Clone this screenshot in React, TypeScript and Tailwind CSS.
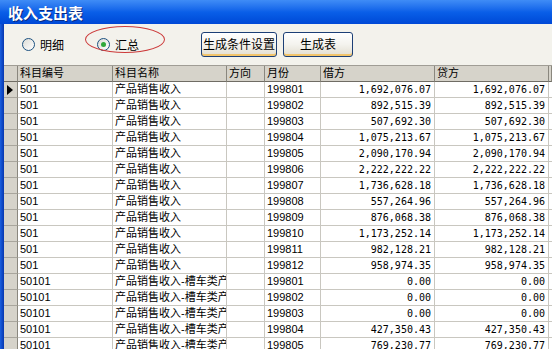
import React from "react";

const rows: [string, string, string, string][] = [
  ["501", "产品销售收入", "199801", "1,692,076.07"],
  ["501", "产品销售收入", "199802", "892,515.39"],
  ["501", "产品销售收入", "199803", "507,692.30"],
  ["501", "产品销售收入", "199804", "1,075,213.67"],
  ["501", "产品销售收入", "199805", "2,090,170.94"],
  ["501", "产品销售收入", "199806", "2,222,222.22"],
  ["501", "产品销售收入", "199807", "1,736,628.18"],
  ["501", "产品销售收入", "199808", "557,264.96"],
  ["501", "产品销售收入", "199809", "876,068.38"],
  ["501", "产品销售收入", "199810", "1,173,252.14"],
  ["501", "产品销售收入", "199811", "982,128.21"],
  ["501", "产品销售收入", "199812", "958,974.35"],
  ["50101", "产品销售收入-槽车类产品", "199801", "0.00"],
  ["50101", "产品销售收入-槽车类产品", "199802", "0.00"],
  ["50101", "产品销售收入-槽车类产品", "199803", "0.00"],
  ["50101", "产品销售收入-槽车类产品", "199804", "427,350.43"],
  ["50101", "产品销售收入-槽车类产品", "199805", "769,230.77"],
];

const cols = "grid grid-cols-[14px_95px_114px_38px_56px_114px_114px_1fr]";
const cell = "h-[16px] leading-[15px] border-r border-b border-[#c9c7c0] overflow-hidden whitespace-nowrap pl-[2px]";
const num = "h-[16px] leading-[15px] border-r border-b border-[#c9c7c0] overflow-hidden whitespace-nowrap text-right pr-[3px] font-['DejaVu_Sans_Mono',monospace] text-[10px]";
const head = "h-[16px] leading-[15px] border-r border-b border-r-[#8a877e] border-b-[#6f6c64] bg-[#d6d3ca] overflow-hidden whitespace-nowrap pl-[2px]";

function XpButton({ label, w }: { label: string; w: string }) {
  return (
    <button
      className={`${w} h-[25px] px-0 whitespace-nowrap rounded-[3px] border border-[#1c3f76] bg-gradient-to-b from-[#ffffff] via-[#f4f3ee] to-[#e2ddcf] shadow-[inset_0_-2px_0_#f2c46a,inset_0_1px_0_#ffffff] text-[12px] text-black font-['Noto_Sans_CJK_SC',sans-serif] leading-none`}
    >
      {label}
    </button>
  );
}

function Radio({ checked, label }: { checked?: boolean; label: string }) {
  return (
    <div className="flex items-center gap-[5px]">
      <div className="w-[13px] h-[13px] rounded-full border border-[#1c5180] bg-gradient-to-br from-[#dcdcd6] to-[#ffffff] flex items-center justify-center">
        {checked && <div className="w-[5px] h-[5px] rounded-full bg-[#2fa83a]" />}
      </div>
      <span className="text-[12px] text-black font-['Noto_Sans_CJK_SC',sans-serif]">{label}</span>
    </div>
  );
}

export default function App() {
  return (
    <div className="w-[552px] h-[349px] overflow-hidden flex flex-col bg-[#f3f2ec] font-['Liberation_Sans','Noto_Sans_CJK_SC',sans-serif]">
      {/* title bar */}
      <div className="h-[24px] shrink-0 bg-gradient-to-b from-[#3f8cf6] via-[#0a5fe8] to-[#0048d6] flex items-center pl-[8px]">
        <span className="text-white font-bold text-[15px] font-['Noto_Sans_CJK_SC',sans-serif] leading-none [text-shadow:1px_1px_0_#0a2a80]">
          收入支出表
        </span>
      </div>

      <div className="flex flex-1 min-h-0">
        <div className="w-[4px] shrink-0 bg-gradient-to-r from-[#1a5fe0] to-[#0837b0]" />

        <div className="flex-1 min-w-0 flex flex-col">
          {/* toolbar */}
          <div className="relative h-[41px] shrink-0 flex items-center pl-[18px]">
            <div className="w-[75px]">
              <Radio label="明细" />
            </div>
            <div className="w-[104px]">
              <Radio checked label="汇总" />
            </div>
            <div className="absolute left-[81px] top-[2px] w-[80px] h-[27px] rounded-[50%] border border-[#cc3a3a]" />
            <div className="flex gap-[6px] -mt-[1px]">
              <XpButton label="生成条件设置" w="w-[76px]" />
              <XpButton label="生成表" w="w-[70px]" />
            </div>
          </div>

          {/* grid */}
          <div className="flex-1 min-h-0 bg-white border-t border-[#a09d95] text-[11px] text-black">
            <div className={cols}>
              <div className={head} />
              <div className={head}>科目编号</div>
              <div className={head}>科目名称</div>
              <div className={head}>方向</div>
              <div className={head}>月份</div>
              <div className={head}>借方</div>
              <div className={head}>贷方</div>
              <div className={head} />
            </div>
            {rows.map((r, i) => (
              <div key={i} className={cols}>
                <div className="h-[16px] border-r border-b border-r-[#8a877e] border-b-[#a9a69d] bg-[#d6d3ca] flex items-center">
                  {i === 0 && (
                    <svg width="7" height="10" viewBox="0 0 7 10" className="ml-[3px]">
                      <path d="M0 0 L6 5 L0 10 Z" fill="#000" />
                    </svg>
                  )}
                </div>
                <div className={cell}>{r[0]}</div>
                <div className={cell}>{r[1]}</div>
                <div className={cell} />
                <div className={cell}>{r[2]}</div>
                <div className={num}>{r[3]}</div>
                <div className={num}>{r[3]}</div>
                <div className="h-[16px] border-b border-[#c9c7c0]" />
              </div>
            ))}
          </div>
        </div>
      </div>
    </div>
  );
}
